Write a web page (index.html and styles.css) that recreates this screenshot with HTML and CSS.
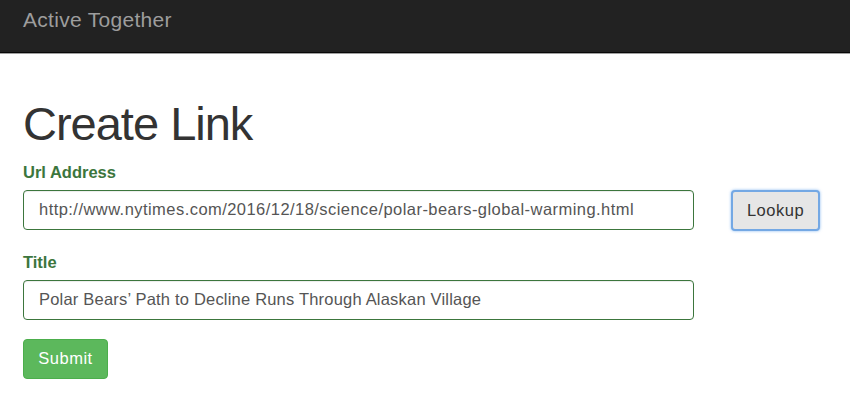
FILE: index.html
```html
<!DOCTYPE html>
<html lang="en">
<head>
  <meta charset="UTF-8" />
  <meta name="viewport" content="width=device-width, initial-scale=1.0"/>
  <title>Active Together - Create Link</title>
  <link rel="stylesheet" href="styles.css">
</head>
<body>
  <nav class="navbar">
    <a class="brand" href="#">Active Together</a>
  </nav>

  <main class="container">
    <h1>Create Link</h1>

    <form class="link-form" onsubmit="return false">
      <div class="form-group">
        <label for="url">Url Address</label>
        <div class="row">
          <input type="text" id="url" class="field field-url" value="http://www.nytimes.com/2016/12/18/science/polar-bears-global-warming.html">
          <button type="button" class="btn btn-lookup">Lookup</button>
        </div>
      </div>

      <div class="form-group">
        <label for="title">Title</label>
        <div class="row">
          <input type="text" id="title" class="field field-title" value="Polar Bears’ Path to Decline Runs Through Alaskan Village">
        </div>
      </div>

      <button type="submit" class="btn btn-submit">Submit</button>
    </form>
  </main>
</body>
</html>
```
FILE: styles.css
```css
body {
  margin: 0;
  font-family: "Liberation Sans", Arial, sans-serif;
  font-size: 16px;
  color: #333;
  background-color: #fff;
}
.navbar {
  height: 52px;
  background-color: #222;
  border-bottom: 1px solid #080808;
  box-shadow: 0 1px 0 #a0a0a0;
  padding: 0 23px;
}
.brand {
  display: inline-block;
  padding-top: 10px;
  font-size: 21px;
  line-height: 20px;
  letter-spacing: 0.3px;
  color: #9d9d9d;
  text-decoration: none;
}
.container {
  padding: 0 23px;
}
h1 {
  margin: 45px 0 11px;
  font-size: 47px;
  font-weight: 500;
  line-height: 1.1;
  letter-spacing: -1px;
  color: #333;
}
.form-group {
  margin-bottom: 20px;
}
label {
  display: block;
  margin-bottom: 7px;
  font-size: 16.5px;
  font-weight: bold;
  line-height: 22px;
  color: #3c763d;
}
.row {
  display: flex;
  align-items: flex-start;
}
.field {
  box-sizing: border-box;
  width: 671px;
  height: 40px;
  padding: 0 15px;
  font-family: inherit;
  font-size: 16.5px;
  color: #555;
  background-color: #fff;
  border: 1px solid #3c763d;
  border-radius: 4px;
  box-shadow: inset 0 1px 1px rgba(0, 0, 0, 0.075);
  outline: none;
}
.field-url {
  letter-spacing: 0.45px;
}
.field-title {
  letter-spacing: 0.2px;
}
.btn {
  box-sizing: border-box;
  height: 40px;
  font-family: inherit;
  font-size: 16.5px;
  letter-spacing: 0.5px;
  border-radius: 4px;
  cursor: pointer;
}
.btn-lookup {
  width: 89px;
  height: 41px;
  margin-left: 37px;
  color: #333;
  background-color: #e6e6e6;
  border: 2px solid #74a8e4;
  box-shadow: 0 0 3px rgba(59, 140, 230, 0.6);
}
.btn-submit {
  width: 85px;
  margin-top: -1px;
  color: #fff;
  background-color: #5cb85c;
  border: 1px solid #4cae4c;
}
.btn-submit:hover {
  background-color: #449d44;
}
```
